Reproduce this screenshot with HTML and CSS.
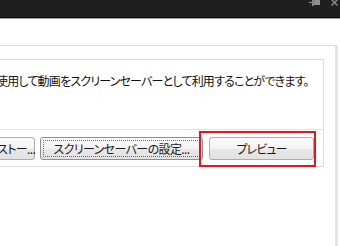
FILE: index.html
```html
<!DOCTYPE html>
<html lang="ja">
<head>
<meta charset="utf-8">
<link rel="stylesheet" href="styles.css">
</head>
<body>
<div class="titlebar">
  <svg class="pin" width="11" height="7" viewBox="0 0 11 7">
    <path d="M0 3.5h3" stroke="#8e8e8e" stroke-width="1.2"/>
    <rect x="3" y="0" width="1.6" height="7" fill="#8e8e8e"/>
    <rect x="4.5" y="1" width="6.5" height="5" fill="#8e8e8e"/>
  </svg>
  <svg class="close" width="7" height="7" viewBox="0 0 7 7">
    <path d="M0.5 0.5l6 6M6.5 0.5l-6 6" stroke="#8e8e8e" stroke-width="1.3"/>
  </svg>
</div>
<div class="titlebar-edge"></div>
<div class="outer">
  <div class="inner">
    <p class="desc">使用して動画をスクリーンセーバーとして利用することができます。</p>
    <div class="buttons">
      <button class="btn btn-list">ストー...</button>
      <button class="btn btn-settings">スクリーンセーバーの設定...</button>
      <button class="btn btn-preview">プレビュー</button>
    </div>
  </div>
</div>
<div class="highlight"></div>
</body>
</html>
```
FILE: styles.css
```css
html, body {
  margin: 0;
  padding: 0;
}
body {
  width: 340px;
  height: 246px;
  overflow: hidden;
  position: relative;
  background: #ffffff;
  font-family: "Noto Sans CJK JP", "Noto Sans", sans-serif;
  font-size: 12px;
  color: #111111;
  font-feature-settings: "palt";
}
.titlebar {
  height: 17px;
  background: #1f1f1f;
  border-bottom: 1px solid #080808;
  display: flex;
  justify-content: flex-end;
  align-items: flex-start;
  gap: 11px;
  padding-right: 2px;
}
.pin {
  margin-top: -1px;
}
.close {
  margin-top: -1px;
}
.titlebar-edge {
  height: 1px;
  background: #a4a4a4;
}
.outer {
  margin-top: 26px;
  margin-left: -20px;
  width: 355px;
  height: 200px;
  border-top: 1px solid #dadada;
  border-right: 3px solid #e4e4e4;
}
.inner {
  margin-top: 13px;
  margin-right: 11px;
  border-top: 1px solid #dcdcdc;
  border-right: 1px solid #dcdcdc;
  border-bottom: 1px solid #dcdcdc;
}
.desc {
  margin: 0;
  box-sizing: border-box;
  height: 70px;
  padding: 12px 0 0 16px;
  line-height: 18px;
  letter-spacing: -0.8px;
  white-space: nowrap;
  border-bottom: 1px solid #e3e3e3;
}
.buttons {
  display: flex;
  justify-content: flex-end;
  gap: 6px;
  padding: 7px 9px 6px 0;
}
.btn {
  box-sizing: border-box;
  height: 23px;
  padding: 0;
  margin: 0;
  flex: none;
  font: inherit;
  font-size: 12px;
  line-height: 21px;
  letter-spacing: -0.6px;
  color: #1b1b1b;
  border: 1px solid #adadad;
  border-radius: 3px;
  background: linear-gradient(#fbfbfb, #f2f2f2 50%, #e8e8e8 51%, #e2e2e2);
  white-space: nowrap;
}
.btn-list {
  width: 39px;
  margin-right: -1px;
}
.btn-settings {
  width: 163px;
  border-color: #8e8e8e;
  outline: 1px dotted #6a6a6a;
  outline-offset: -4px;
}
.btn-preview {
  width: 105px;
  letter-spacing: -0.9px;
}
.highlight {
  position: absolute;
  left: 199px;
  top: 131px;
  width: 117px;
  height: 36px;
  box-sizing: border-box;
  border: 2px solid #e8141c;
}
```
